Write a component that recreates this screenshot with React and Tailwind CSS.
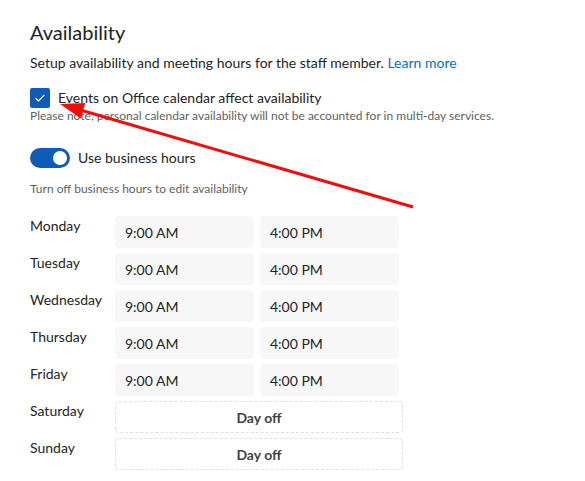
import React, { useState } from 'react';

const days = [
  { name: 'Monday', start: '9:00 AM', end: '4:00 PM' },
  { name: 'Tuesday', start: '9:00 AM', end: '4:00 PM' },
  { name: 'Wednesday', start: '9:00 AM', end: '4:00 PM' },
  { name: 'Thursday', start: '9:00 AM', end: '4:00 PM' },
  { name: 'Friday', start: '9:00 AM', end: '4:00 PM' },
  { name: 'Saturday', off: true },
  { name: 'Sunday', off: true },
];

const TimeCell = ({ value }) => (
  <div className="w-[139px] h-[32px] rounded bg-[#f7f7f7] flex items-center pl-[10px] pt-[1px] text-[14px] text-[#242424]">
    {value}
  </div>
);

const DayRow = ({ day }) => (
  <div className="flex h-[37px]">
    <div className="w-[85px] text-[14px] text-[#242424] leading-[20px]">{day.name}</div>
    {day.off ? (
      <div className="w-[288px] h-[32px] rounded border border-dashed border-[#e0e0e0] flex items-center justify-center text-[14px] font-bold text-[#424242]">
        Day off
      </div>
    ) : (
      <div className="flex gap-[6px]">
        <TimeCell value={day.start} />
        <TimeCell value={day.end} />
      </div>
    )}
  </div>
);

export default function App() {
  const [affects, setAffects] = useState(true);
  const [businessHours, setBusinessHours] = useState(true);

  return (
    <div className="relative w-[585px] h-[481px] bg-white overflow-hidden font-['Segoe_UI','Lato',sans-serif] text-[#242424]">
      <div className="pl-[30px] pt-[19px]">
        <h2 className="text-[20px] leading-[26px]">Availability</h2>
        <p className="mt-[8px] text-[14px] leading-[20px]">
          Setup availability and meeting hours for the staff member.{' '}
          <a className="text-[#0f6cbd]">Learn more</a>
        </p>

        {/* calendar checkbox */}
        <label className="mt-[15px] flex items-center gap-[8px] cursor-pointer" onClick={() => setAffects(!affects)}>
          <span className={`w-[20px] h-[20px] rounded-[2px] flex items-center justify-center ${affects ? 'bg-[#0f5cb8]' : 'border border-gray-500'}`}>
            {affects && (
              <svg width="12" height="10" viewBox="0 0 12 10" fill="none">
                <path d="M1.5 5.2L4.4 8 10.5 1.8" stroke="white" strokeWidth="1.2" />
              </svg>
            )}
          </span>
          <span className="text-[14px] leading-[20px]">Events on Office calendar affect availability</span>
        </label>
        <p className="text-[12px] leading-[16px] text-[#616161]">
          Please note, personal calendar availability will not be accounted for in multi-day services.
        </p>

        {/* business hours switch */}
        <div className="mt-[24px] flex items-center gap-[8px]">
          <button
            onClick={() => setBusinessHours(!businessHours)}
            className={`w-[40px] h-[20px] rounded-full flex items-center px-[3px] ${businessHours ? 'bg-[#0f5cb8] justify-end' : 'bg-gray-300 justify-start'}`}
          >
            <span className="w-[14px] h-[14px] rounded-full bg-white" />
          </button>
          <span className="text-[14px] leading-[20px]">Use business hours</span>
        </div>
        <p className="mt-[13px] text-[12px] leading-[16px] text-[#616161]">Turn off business hours to edit availability</p>

        <div className="mt-[19px] flex flex-col">
          {days.map((d) => (
            <DayRow key={d.name} day={d} />
          ))}
        </div>
      </div>

      {/* annotation arrow */}
      <svg className="absolute left-0 top-0 pointer-events-none" width="585" height="481">
        <line x1="413" y1="207" x2="82" y2="110.5" stroke="#f20d0d" strokeWidth="3" />
        <polygon points="60,104 85.2,103 80.8,118.4" fill="#f20d0d" />
      </svg>
    </div>
  );
}
